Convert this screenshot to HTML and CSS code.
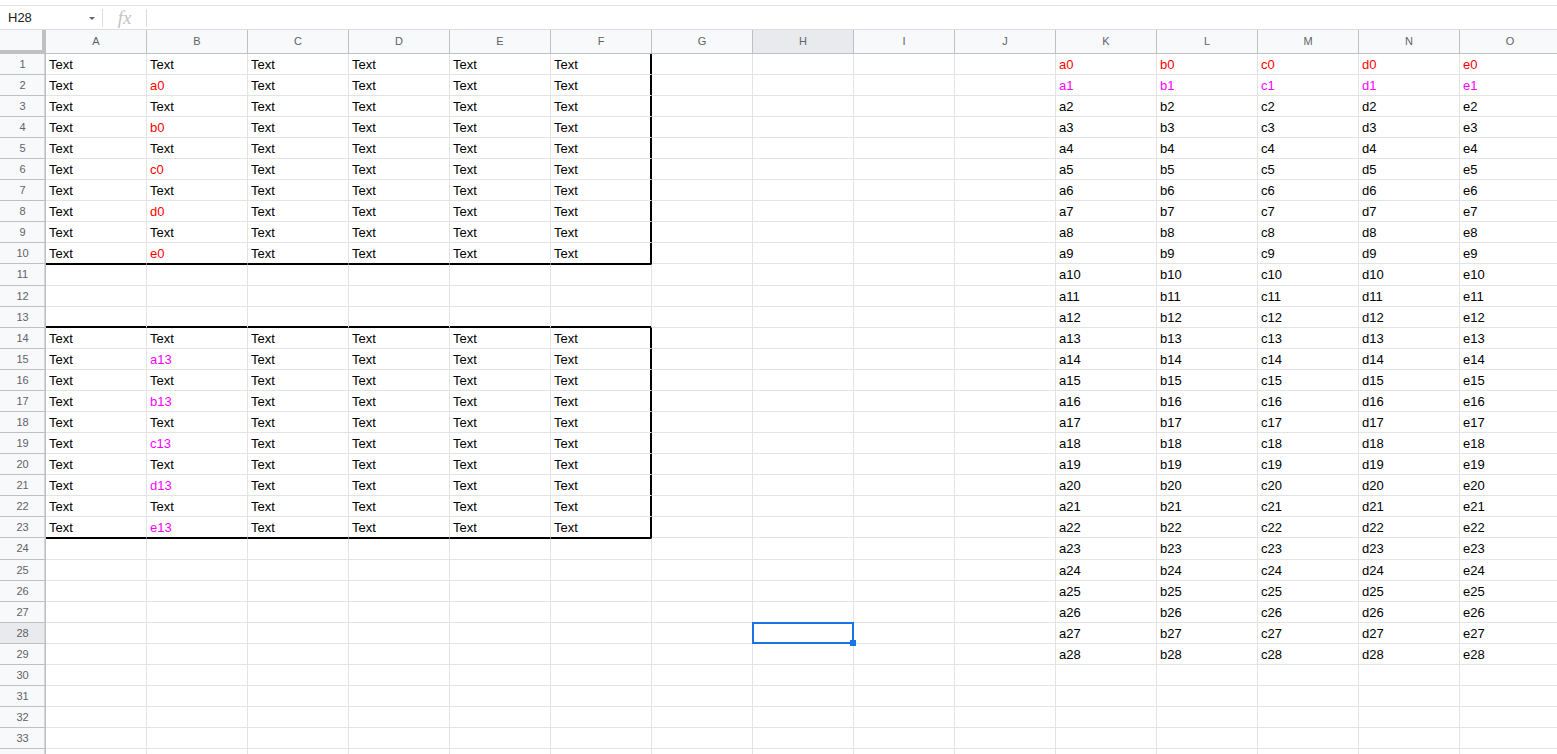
FILE: index.html
```html
<!DOCTYPE html>
<html lang="en">
<head>
    <meta charset="UTF-8">
    <title>Sheet</title>
    <link rel="stylesheet" href="styles.css">
</head>
<body>
    <div class="topline"></div>
    <div class="formula-bar">
        <div class="namebox">
            <span>H28</span>
            <span class="caret"></span>
        </div>
        <div class="sep"></div>
        <div class="fx">fx</div>
        <div class="sep"></div>
        <div class="formula-input"></div>
    </div>

    <div class="sheet" id="sheet"></div>

    <script>
        var cols = 'ABCDEFGHIJKLMNO'.split('');
        var rows = 34;
        var sheet = document.getElementById('sheet');

        function cell(cls, text) {
            var d = document.createElement('div');
            d.className = cls;
            if (text) d.textContent = text;
            sheet.appendChild(d);
            return d;
        }

        // header row
        cell('corner');
        cols.forEach(function (c) {
            cell('col-head' + (c === 'H' ? ' active' : ''), c);
        });

        var letters = ['a', 'b', 'c', 'd', 'e'];

        for (var r = 1; r <= rows; r++) {
            // last row is only a sliver at the bottom of the window
            cell('row-head' + (r === 28 ? ' active' : ''), r < rows ? String(r) : '');
            for (var i = 0; i < cols.length; i++) {
                var cls = 'cell';
                var text = '';
                var inTop = r >= 1 && r <= 10;
                var inBottom = r >= 14 && r <= 23;

                if (i < 6 && (inTop || inBottom)) {
                    text = 'Text';
                    if (i === 1 && inTop && r % 2 === 0) {
                        text = letters[r / 2 - 1] + '0';
                        cls += ' red';
                    }
                    if (i === 1 && inBottom && r % 2 === 1) {
                        text = letters[(r - 15) / 2] + '13';
                        cls += ' pink';
                    }
                    if (i === 5) cls += ' edge-right';
                    if (r === 10 || r === 23) cls += ' edge-bottom';
                }

                // thick range borders spill into the rows around the boxes
                if (i < 6 && (r === 11 || r === 24)) cls += ' edge-below';
                if (i < 6 && r === 13) cls += ' edge-above';

                if (i >= 10 && r <= 29) {
                    text = letters[i - 10] + (r - 1);
                    if (r === 1) cls += ' red';
                    if (r === 2) cls += ' pink';
                }

                if (cols[i] === 'H' && r === 28) cls += ' selected';

                cell(cls, text);
            }
        }
    </script>
</body>
</html>
```

FILE: styles.css
```css
html, body {
    margin: 0;
    padding: 0;
    overflow: hidden;
    background-color: white;
    font-family: Arial, "Liberation Sans", sans-serif;
}
.topline {
    height: 5px;
    border-bottom: 1px solid #e3e3e3;
}
.formula-bar {
    display: flex;
    align-items: center;
    height: 23px;
    border-bottom: 1px solid #dadce0;
}
.namebox {
    width: 102px;
    box-sizing: border-box;
    padding: 0 7px 0 8px;
    display: flex;
    align-items: center;
    justify-content: space-between;
    font-size: 13px;
    color: #202124;
}
.caret {
    width: 0;
    height: 0;
    border-left: 3px solid transparent;
    border-right: 3px solid transparent;
    border-top: 3px solid #5f6368;
    margin-top: 2px;
}
.sep {
    width: 1px;
    height: 18px;
    background-color: #dadce0;
}
.fx {
    width: 43px;
    text-align: center;
    font-family: "Liberation Serif", serif;
    font-style: italic;
    font-size: 19px;
    color: #c4c4c4;
    line-height: 23px;
}
.formula-input {
    flex: 1;
}
.sheet {
    display: grid;
    grid-template-columns: 46px repeat(15, 101px);
    grid-template-rows: 24px repeat(10, 21px) 22px repeat(12, 21px) 22px repeat(10, 21px);
    font-size: 13px;
}
.sheet > div {
    box-sizing: border-box;
    white-space: nowrap;
    overflow: hidden;
}
.corner {
    background-color: #f8f9fa;
    border-right: 4px solid #c0c0c0;
    border-bottom: 4px solid #c0c0c0;
}
.col-head {
    background-color: #f8f9fa;
    border-right: 1px solid #c0c0c0;
    border-bottom: 1px solid #c0c0c0;
    color: #5f6368;
    font-size: 11px;
    text-align: center;
    line-height: 23px;
}
.row-head {
    background-color: #f8f9fa;
    border-right: 1px solid #c0c0c0;
    box-shadow: inset -1px 0 0 #d6d6d6;
    border-bottom: 1px solid #c0c0c0;
    color: #5f6368;
    font-size: 11px;
    text-align: center;
    line-height: 20px;
}
.col-head.active,
.row-head.active {
    background-color: #e8eaed;
}
.cell {
    border-right: 1px solid #e2e3e3;
    border-bottom: 1px solid #e2e3e3;
    padding-left: 3px;
    line-height: 21px;
    color: #000;
}
.cell.red {
    color: #ff0000;
}
.cell.pink {
    color: #ff00ff;
}
.cell.edge-right {
    border-right-color: #000;
    box-shadow: inset -1px 0 0 #000;
}
.cell.edge-bottom {
    border-bottom-color: #000;
}
.cell.edge-below {
    border-top: 1px solid #000;
    line-height: 20px;
}
.cell.edge-above {
    border-bottom-color: #000;
    box-shadow: inset 0 -1px 0 #000;
}
.sheet > .selected {
    position: relative;
    overflow: visible;
}
.selected::after {
    content: "";
    position: absolute;
    left: -1px;
    top: -1px;
    width: 102px;
    height: 22px;
    box-sizing: border-box;
    border: 2px solid #1a73e8;
}
.selected::before {
    content: "";
    position: absolute;
    left: 97px;
    top: 17px;
    width: 6px;
    height: 6px;
    background-color: #1a73e8;
    z-index: 1;
}
```
